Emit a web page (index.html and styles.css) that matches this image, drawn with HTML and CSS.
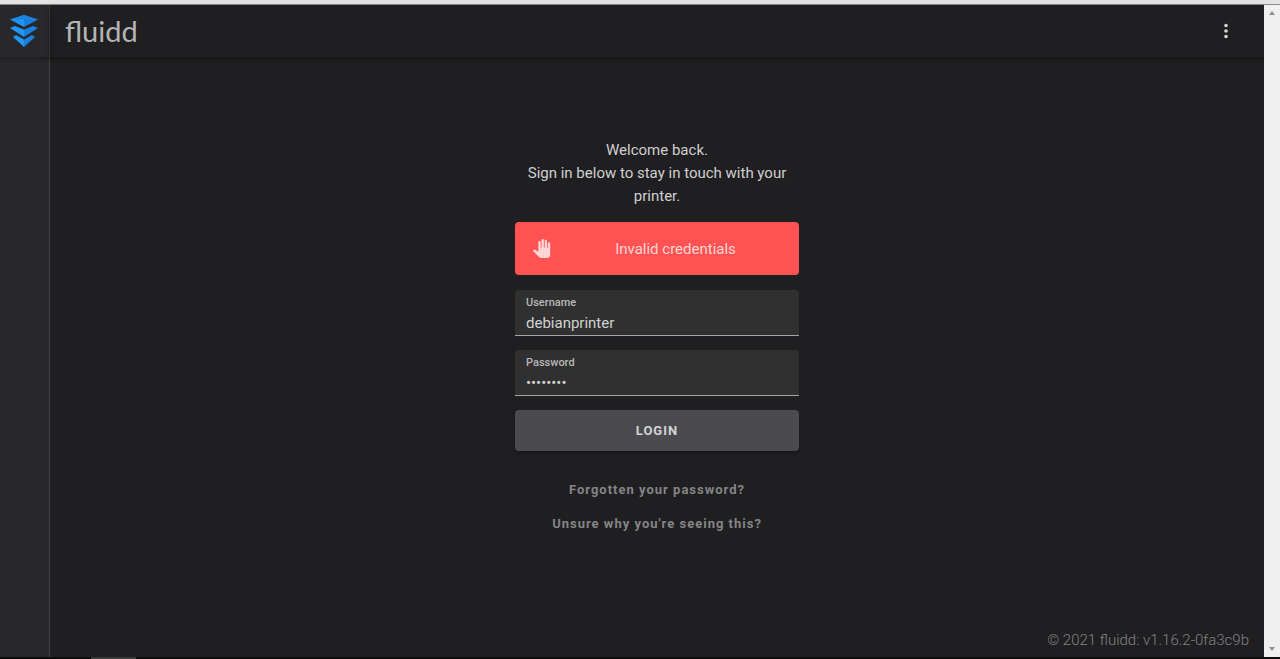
FILE: index.html
```html
<!DOCTYPE html>
<html lang="en">
<head>
  <meta charset="utf-8">
  <meta name="viewport" content="width=device-width, initial-scale=1">
  <title>fluidd</title>
  <link rel="stylesheet" href="styles.css">
</head>
<body>
  <div class="window">
    <div class="window-edge"></div>

    <div class="app">
      <nav class="sidebar">
        <a class="logo" href="#" aria-label="Home">
          <svg width="28" height="32" viewBox="0 0 28 32">
            <path fill="#2196f3" d="M14 0 0 4.500 14 12z"/>
            <path fill="#1a80dc" d="M14 0l14 4.500L14 12z"/>
            <path fill="#1b84e0" d="M14 0 0 4.500h28z"/>
            <path fill="#2196f3" d="M0 13l5-2 9 3.500V22z"/>
            <path fill="#1a80dc" d="M28 13l-5-2-9 3.500V22z"/>
            <path fill="#2196f3" d="M3 22l3-2 8 4.500V32z"/>
            <path fill="#1a80dc" d="M25 22l-3-2-8 4.500V32z"/>
          </svg>
        </a>
      </nav>

      <div class="content">
        <header class="toolbar">
          <span class="brand">fluidd</span>
          <button class="menu-btn" type="button" aria-label="Menu">
            <svg width="22" height="22" viewBox="0 0 24 24" fill="currentColor">
              <path d="M12 16a2 2 0 1 1 0 4 2 2 0 0 1 0-4m0-6a2 2 0 1 1 0 4 2 2 0 0 1 0-4m0-6a2 2 0 1 1 0 4 2 2 0 0 1 0-4z"/>
            </svg>
          </button>
        </header>

        <main class="main">
          <form class="login">
            <p class="welcome">Welcome back.<br>Sign in below to stay in touch with your printer.</p>

            <div class="alert" role="alert">
              <svg class="alert-icon" width="19" height="19" viewBox="0 0 24 24" fill="currentColor">
                <path d="M23 5.5V20c0 2.2-1.8 4-4 4h-7.3c-1.08 0-2.1-.43-2.85-1.19L1 14.83s1.26-1.23 1.3-1.25c.22-.19.49-.29.79-.29.22 0 .42.06.6.16.04.01 4.31 2.46 4.31 2.46V4c0-.83.67-1.5 1.5-1.5S11 3.17 11 4v7h1V1.5c0-.83.67-1.5 1.5-1.5S15 .67 15 1.5V11h1V2.5c0-.83.67-1.5 1.5-1.5s1.5.67 1.5 1.5V11h1V5.5c0-.83.67-1.5 1.5-1.5s1.5.67 1.5 1.5z"/>
              </svg>
              <span class="alert-text">Invalid credentials</span>
            </div>

            <div class="field">
              <label for="username">Username</label>
              <input type="text" id="username" value="debianprinter" spellcheck="false">
            </div>
            <div class="field">
              <label for="password">Password</label>
              <input type="password" id="password" value="12345678">
            </div>

            <button class="login-btn" type="submit">LOGIN</button>

            <div class="links">
              <a href="#">Forgotten your password?</a>
              <a href="#">Unsure why you're seeing this?</a>
            </div>
          </form>
        </main>

        <footer class="footer">© 2021 fluidd: v1.16.2-0fa3c9b</footer>
      </div>

      <div class="scrollbar">
        <svg width="6" height="4" viewBox="0 0 6 4"><path fill="#8f8f8f" d="M3 0l3 4H0z"/></svg>
        <svg width="6" height="4" viewBox="0 0 6 4"><path fill="#8f8f8f" d="M0 0h6L3 4z"/></svg>
      </div>
    </div>

    <div class="taskbar"><div class="task"></div></div>
  </div>
</body>
</html>
```

FILE: styles.css
```css
* {
  box-sizing: border-box;
}

body {
  margin: 0;
  background-color: #1f1f21;
  color: #cfcfcf;
  font-family: Roboto, sans-serif;
  font-size: 15px;
}

.window {
  display: flex;
  flex-direction: column;
  min-height: 100vh;
}

.window-edge {
  height: 5px;
  background-color: #e4e4e4;
  border-bottom: 1px solid #8c8c8c;
}

.app {
  display: flex;
  flex: 1;
}

/* Sidebar */
.sidebar {
  width: 50px;
  background-color: #28282a;
  border-right: 1px solid #414143;
}

.logo {
  display: flex;
  align-items: center;
  justify-content: center;
  height: 52px;
  padding-right: 2px;
  box-shadow: 0 2px 4px rgba(0, 0, 0, 0.3);
}

.content {
  display: flex;
  flex: 1;
  flex-direction: column;
}

/* Top bar */
.toolbar {
  display: flex;
  align-items: center;
  justify-content: space-between;
  height: 52px;
  padding: 0 27px 0 15px;
  box-shadow: 0 2px 4px rgba(0, 0, 0, 0.4);
}

.brand {
  color: #b4b4b4;
  font-family: Lato, sans-serif;
  font-size: 29px;
  line-height: 36px;
}

.menu-btn {
  display: flex;
  padding: 0;
  border: 0;
  background: none;
  color: #d8d8d8;
}

/* Login form */
.main {
  display: flex;
  flex: 1;
  justify-content: center;
  padding-top: 82px;
}

.login {
  display: flex;
  flex-direction: column;
  gap: 14px;
  width: 284px;
}

.welcome {
  margin: 0;
  line-height: 23px;
  text-align: center;
}

.alert {
  display: flex;
  align-items: center;
  height: 53px;
  margin-bottom: 1px;
  padding: 0 17px;
  border-radius: 4px;
  background-color: #ff5252;
  color: #ffd5d5;
}

.alert-text {
  flex: 1;
  padding-left: 18px;
  text-align: center;
}

.field {
  height: 46px;
  padding: 5px 11px 0;
  border-bottom: 1px solid #a5a5a5;
  border-radius: 4px 4px 0 0;
  background-color: #303030;
}

.field label {
  display: block;
  color: #b8b8b8;
  font-size: 11px;
  font-weight: 500;
  line-height: 16px;
}

.field input {
  display: block;
  width: 100%;
  height: 24px;
  padding: 0;
  border: 0;
  outline: 0;
  background: none;
  color: #d2d2d2;
  font: inherit;
}

.login-btn {
  height: 41px;
  border: 0;
  border-radius: 4px;
  background-color: #4b4a4f;
  box-shadow: 0 2px 3px rgba(0, 0, 0, 0.3);
  color: #d4d4d5;
  font-family: inherit;
  font-size: 13px;
  font-weight: 700;
  letter-spacing: 1px;
}

.links {
  display: flex;
  flex-direction: column;
  align-items: center;
  gap: 14px;
  padding-top: 15px;
}

.links a {
  color: #858586;
  font-size: 13px;
  font-weight: 700;
  letter-spacing: 1px;
  line-height: 20px;
  text-decoration: none;
}

.footer {
  padding: 0 15px 5px;
  color: #828283;
  font-weight: 300;
  line-height: 23px;
  text-align: right;
}

/* Window chrome */
.scrollbar {
  display: flex;
  flex-direction: column;
  align-items: center;
  justify-content: space-between;
  width: 16px;
  padding: 6px 0;
  background-color: #f0f0f0;
}

.taskbar {
  height: 2px;
  padding-left: 91px;
  background-color: #0b0b0b;
}

.task {
  width: 45px;
  height: 2px;
  background-color: #3a3a3a;
}
```
